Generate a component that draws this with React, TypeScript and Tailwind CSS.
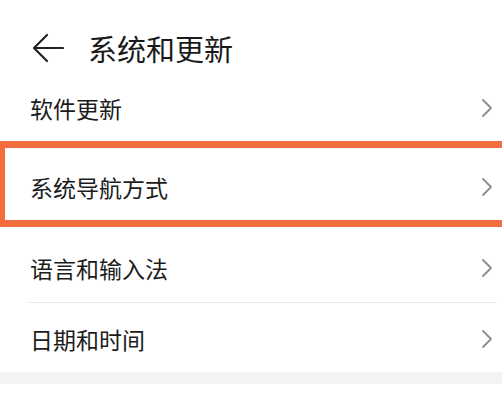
import React from "react";

const font = {
  fontFamily: '"Noto Sans CJK SC", "Noto Sans", sans-serif',
};

function Chevron() {
  return (
    <svg width="12" height="20" viewBox="0 0 12 20" fill="none" className="shrink-0">
      <path
        d="M2 2 L10 10 L2 18"
        stroke="#8c8c8c"
        strokeWidth="1.8"
        strokeLinecap="round"
        strokeLinejoin="round"
      />
    </svg>
  );
}

function Row({
  label,
  className,
}: {
  label: string;
  className: string;
}) {
  return (
    <div className={`flex items-center justify-between pl-[30px] pr-[9px] ${className}`}>
      <span className="text-[23px] leading-none text-[#1c1c1c]">{label}</span>
      <Chevron />
    </div>
  );
}

export default function App() {
  return (
    <div className="w-[502px] h-[400px] overflow-hidden bg-white" style={font}>
      {/* HEADER */}
      <header className="mt-[16px] h-[64px] flex items-center pl-[32px]">
        <svg width="32" height="30" viewBox="0 0 32 30" fill="none" className="shrink-0">
          <path
            d="M15 2 L2 15 L15 28 M2 15 H31"
            stroke="#222"
            strokeWidth="2.2"
            strokeLinecap="round"
            strokeLinejoin="round"
          />
        </svg>
        <h1 className="ml-[24px] text-[29px] leading-none font-normal text-[#1a1a1a]">
          系统和更新
        </h1>
      </header>

      {/* LIST */}
      <Row label="软件更新" className="h-[54px] pt-[2px]" />

      <div className="mt-[7px] h-[86px] ml-[-2px] mr-[-8px] border-[7px] border-[#f26d3d] flex items-center justify-between pl-[25px] pr-[10px] pt-[6px]">
        <span className="text-[23px] leading-none text-[#1c1c1c]">系统导航方式</span>
        <Chevron />
      </div>

      <Row label="语言和输入法" className="h-[75px] pt-[7px]" />
      <div className="ml-[29px] mr-[5px] h-px bg-[#e6e6e6]" />
      <Row label="日期和时间" className="h-[69px] pt-[3px]" />

      <div className="h-[12px] bg-[#f3f3f3]" />
    </div>
  );
}
